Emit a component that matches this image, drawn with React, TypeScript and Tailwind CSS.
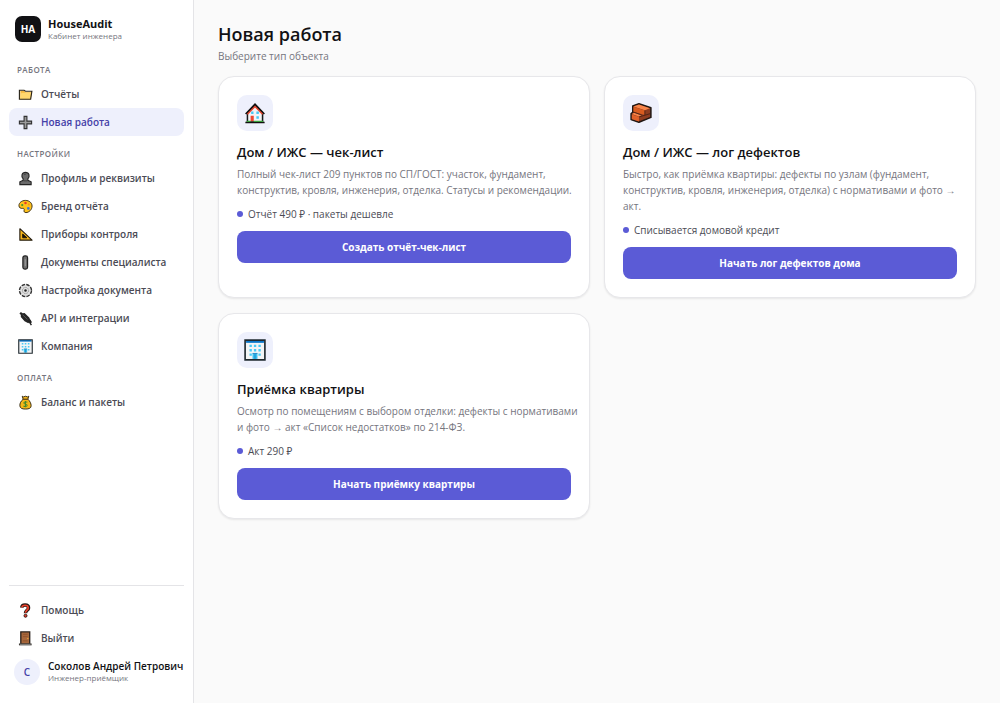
import type { ReactNode } from "react";

type IconName =
  | "folder"
  | "plus"
  | "person"
  | "palette"
  | "ruler"
  | "clip"
  | "gear"
  | "plug"
  | "office"
  | "money"
  | "question"
  | "door"
  | "house"
  | "brick";

interface NavItem {
  icon: IconName;
  label: string;
  active?: boolean;
}

interface WorkCard {
  icon: IconName;
  title: string;
  text: string;
  note: string;
  action: string;
}

const SECTIONS: { title: string; items: NavItem[] }[] = [
  {
    title: "Работа",
    items: [
      { icon: "folder", label: "Отчёты" },
      { icon: "plus", label: "Новая работа", active: true },
    ],
  },
  {
    title: "Настройки",
    items: [
      { icon: "person", label: "Профиль и реквизиты" },
      { icon: "palette", label: "Бренд отчёта" },
      { icon: "ruler", label: "Приборы контроля" },
      { icon: "clip", label: "Документы специалиста" },
      { icon: "gear", label: "Настройка документа" },
      { icon: "plug", label: "API и интеграции" },
      { icon: "office", label: "Компания" },
    ],
  },
  { title: "Оплата", items: [{ icon: "money", label: "Баланс и пакеты" }] },
];

const CARDS: WorkCard[] = [
  {
    icon: "house",
    title: "Дом / ИЖС — чек-лист",
    text: "Полный чек-лист 209 пунктов по СП/ГОСТ: участок, фундамент, конструктив, кровля, инженерия, отделка. Статусы и рекомендации.",
    note: "Отчёт 490 ₽ · пакеты дешевле",
    action: "Создать отчёт-чек-лист",
  },
  {
    icon: "brick",
    title: "Дом / ИЖС — лог дефектов",
    text: "Быстро, как приёмка квартиры: дефекты по узлам (фундамент, конструктив, кровля, инженерия, отделка) с нормативами и фото → акт.",
    note: "Списывается домовой кредит",
    action: "Начать лог дефектов дома",
  },
  {
    icon: "office",
    title: "Приёмка квартиры",
    text: "Осмотр по помещениям с выбором отделки: дефекты с нормативами и фото → акт «Список недостатков» по 214-ФЗ.",
    note: "Акт 290 ₽",
    action: "Начать приёмку квартиры",
  },
];

export default function App() {
  return (
    <div className="flex min-h-screen bg-[#fafafa] font-['Open_Sans','Noto_Sans',sans-serif] text-[#111114]">
      <Sidebar />
      <main className="min-w-0 flex-1 px-6 pt-5 pb-6">
        <h1 className="text-[18px] leading-7 font-semibold">Новая работа</h1>
        <p className="mb-3 text-[10px] leading-4 text-[#75757e]">Выберите тип объекта</p>
        <div className="grid grid-cols-2 gap-x-[14px] gap-y-[15px]">
          {CARDS.map((c) => (
            <Card key={c.title} card={c} />
          ))}
        </div>
      </main>
    </div>
  );
}

function Sidebar() {
  return (
    <aside className="flex w-[194px] shrink-0 flex-col border-r border-[#e4e4e7] bg-white px-[9px] pt-4 pb-[18px]">
      <div className="mb-[18px] flex items-center gap-[7px] px-[6px]">
        <div className="flex size-[26px] shrink-0 items-center justify-center rounded-[7px] bg-[#111114] text-[10px] font-bold text-white">
          HA
        </div>
        <div>
          <div className="text-[11px] leading-[14px] font-bold">HouseAudit</div>
          <div className="text-[8px] leading-[10px] text-[#75757e]">Кабинет инженера</div>
        </div>
      </div>

      <nav className="flex flex-col gap-2">
        {SECTIONS.map((s) => (
          <section key={s.title}>
            <h2 className="px-2 text-[8px] leading-5 font-semibold tracking-wider text-[#75757e] uppercase">
              {s.title}
            </h2>
            {s.items.map((i) => (
              <NavButton key={i.label} item={i} />
            ))}
          </section>
        ))}
      </nav>

      <div className="mt-auto border-t border-[#e4e4e7] pt-[10px]">
        <NavButton item={{ icon: "question", label: "Помощь" }} />
        <NavButton item={{ icon: "door", label: "Выйти" }} />
        <div className="mt-[7px] flex items-center gap-2 px-[5px]">
          <div className="flex size-[26px] shrink-0 items-center justify-center rounded-full bg-[#eef0fc] text-[10px] font-semibold text-[#4540a8]">
            С
          </div>
          <div className="whitespace-nowrap">
            <div className="text-[10px] leading-3 font-semibold">Соколов Андрей Петрович</div>
            <div className="text-[8px] leading-3 text-[#75757e]">Инженер-приёмщик</div>
          </div>
        </div>
      </div>
    </aside>
  );
}

function NavButton({ item }: { item: NavItem }) {
  return (
    <button
      type="button"
      className={`flex h-7 w-full items-center gap-2 rounded-lg px-[9px] text-left text-[10px] font-semibold whitespace-nowrap ${
        item.active ? "bg-[#eef0fc] text-[#4540a8]" : "text-[#4b4b55]"
      }`}
    >
      <Icon name={item.icon} className="size-[15px] shrink-0" />
      {item.label}
    </button>
  );
}

function Card({ card }: { card: WorkCard }) {
  return (
    <article className="rounded-2xl border border-[#e7e7ea] bg-white p-[18px] shadow-[0_1px_2px_rgba(0,0,0,0.08)]">
      <div className="mb-[11px] flex size-9 items-center justify-center rounded-[10px] bg-[#eef0fc]">
        <Icon name={card.icon} className="size-[22px]" />
      </div>
      <h2 className="mb-1 text-[13px] leading-5 font-semibold">{card.title}</h2>
      <p className="-mr-2 mb-2 text-[10px] leading-4 text-[#75757e]">{card.text}</p>
      <p className="mb-[9px] flex items-center gap-[5px] text-[10px] leading-4 text-[#4b4b55]">
        <span className="size-[6px] rounded-full bg-[#5b5bd6]" />
        {card.note}
      </p>
      <button
        type="button"
        className="h-8 w-full rounded-lg bg-[#5b5bd6] text-[10px] font-bold text-white"
      >
        {card.action}
      </button>
    </article>
  );
}

const ICONS: Record<IconName, ReactNode> = {
  folder: (
    <>
      <path d="M2.500 4h4l1.500 1.500h7L13.500 13h-11z" fill="#f3b73e" />
      <path d="M3.500 6h11L13 13H2z" fill="#ffd76e" />
      <path d="M1.500 13V3.500h5L8 4.500h6.800L13.500 13z" fill="none" stroke="#2a2419" strokeWidth="1.200" />
    </>
  ),
  plus: <path d="M6.500 1.500h3v5h5v3h-5v5h-3v-5h-5v-3h5z" fill="#9b9b9b" stroke="#333" strokeWidth="1.200" />,
  person: (
    <>
      <path
        d="M5.500 8.500C3 5.500 4 1.500 8 1.500s5 4 2.500 7v1.500l3.500 1.500v3H2v-3L5.500 10z"
        fill="#6b6b6b"
        stroke="#252525"
        strokeWidth="1.200"
      />
      <path d="M6 10.500h4M6.500 4l2-.8" stroke="#3f3f3f" />
    </>
  ),
  palette: (
    <>
      <path
        d="M8 1.500c4 0 7 2.700 7 6 0 4-3.500 7-6.500 7-1.500 0-2.500-1-2-2.500.4-1.200 0-2.200-1.500-2-2 .3-4-.5-4-3C1 4 4 1.500 8 1.500z"
        fill="#ffc21c"
        stroke="#3a2c10"
      />
      <circle cx="4.500" cy="6.500" r="1.200" fill="#3b9b38" />
      <circle cx="8" cy="4.300" r="1.300" fill="#e83a2a" />
      <circle cx="11.500" cy="5.800" r="1" fill="#fa8b20" />
      <circle cx="11" cy="10" r="1.400" fill="#3476df" />
    </>
  ),
  ruler: (
    <>
      <path d="M2 1.800 15 14H2z" fill="#f5b51c" stroke="#221b10" strokeWidth="1.200" strokeLinejoin="round" />
      <path d="M5 7.500 9.500 11.500H5z" fill="#17130b" stroke="#17130b" />
    </>
  ),
  clip: (
    <>
      <rect x="5.200" y="1" width="5" height="14" rx="2" fill="#6d6d6d" stroke="#222" strokeWidth="1.300" />
      <path d="M7.700 4.500v7.500" stroke="#a0a0a0" strokeWidth="1.100" />
    </>
  ),
  gear: (
    <>
      <circle cx="8" cy="8" r="6.300" fill="#dedede" stroke="#333" strokeWidth="1.700" strokeDasharray="3.700 1.250" />
      <circle cx="8" cy="8" r="5.500" fill="#dedede" />
      <circle cx="8" cy="8" r="3.300" fill="none" stroke="#777" strokeWidth=".8" strokeDasharray="1.500 1" />
      <circle cx="8" cy="8" r="1.300" fill="#222" />
    </>
  ),
  plug: (
    <>
      <path d="M1.500 3 3 1l2 1.500L7 2l5 5 1.500 3.500-2.500 2.500L7 11 3 6.500V4z" fill="#262626" />
      <path d="m11 10 3.300 5M12.500 9.500l1.800 3" stroke="#222" strokeWidth="1.500" />
      <path d="m5 4 5 5" stroke="#575757" />
    </>
  ),
  office: (
    <>
      <path d="M1 1.500h14v13H1z" fill="#f3f5f6" />
      <path d="M1.500 1.900h13" stroke="#0875c9" strokeWidth="1.800" />
      <path d="M4 5h1.700M7.200 5h1.700M10.500 5h1.700M4 8.200h1.700M7.200 8.200h1.700M10.500 8.200h1.700M4 11.400h1.700M10.500 11.400h1.700" stroke="#48caf6" strokeWidth="1.700" />
      <path d="M6.200 10.500h3.600v4H6.200z" fill="#37c0f0" />
      <path d="M6.200 10.500h3.600M8 11v3.500" stroke="#1679bd" strokeWidth=".6" />
      <path d="M.8.800h14.400v14.400H.8z" fill="none" stroke="#202a30" strokeWidth="1.200" />
    </>
  ),
  money: (
    <>
      <path
        d="M5.500 4.500C3 6.500 1.800 9 2 11.500S4 15 8 15s6-1 6-3.500-1.200-5-3.500-7z"
        fill="#f7b719"
        stroke="#322710"
      />
      <path d="M4.500 1.300 6 2l2-.7 2 .7 1.500-.7-1 3.200h-5z" fill="#f7b719" stroke="#322710" />
      <path d="M5 4.700h6" stroke="#725019" />
      <path d="M10 7.800C8 6.800 6 7.500 6.300 8.800c.3 1.200 3.500.7 3.500 2.200 0 1.400-2.300 1.700-4 .8M8 6.500v6.500" fill="none" stroke="#458b2d" strokeWidth="1.100" />
    </>
  ),
  question: (
    <>
      <path d="M4 5C4.200 2.800 5.500 2.200 7.500 2.200c2.500 0 3.700 1.200 3.700 3C11.200 7.700 8 7.900 8 10.800" fill="none" stroke="#291915" strokeWidth="3.800" />
      <path d="M4.200 4.700C4.500 3 5.700 2.400 7.500 2.400c2.300 0 3.400 1 3.400 2.800C10.900 7.500 8 7.800 8 10.500" fill="none" stroke="#ee422b" strokeWidth="1.800" />
      <circle cx="8" cy="13.600" r="1.600" fill="#e93a28" stroke="#291915" />
    </>
  ),
  door: (
    <>
      <path d="M3 1h9.500v13H3z" fill="#a8683d" stroke="#29211b" strokeWidth="1.400" />
      <path d="M5.300 3.500h4.900M5.300 6h4.900M5.300 10.500h4.900" stroke="#8a4d27" strokeWidth=".8" />
      <path d="M1 14.300h13.500" stroke="#37332f" strokeWidth="2" />
      <path d="M2 14.200h11.500" stroke="#aaa" strokeWidth=".8" />
      <circle cx="10.500" cy="8" r=".7" fill="#efb13b" />
    </>
  ),
  house: (
    <>
      <path d="M2.500 8 8 2.500 13.500 8v6.500h-11z" fill="#f3f4f5" stroke="#15191c" strokeWidth="1.100" />
      <path d="M1.200 8.700 8 1.600l6.800 7.100" fill="none" stroke="#111" strokeWidth="1.200" />
      <path d="M2.500 8.900 8 3.200l5.500 5.700" fill="none" stroke="#ed4830" strokeWidth="1" />
      <path d="M4.800 10h2.300v4H4.800z" fill="#ed4830" />
      <path d="M5.200 7.800h1.700M9 7.800h1.800M9 11.300h1.800" stroke="#45c8f4" strokeWidth="1.700" />
      <path d="M1 14.900h14" stroke="#111" strokeWidth="1.100" />
      <path d="M2 14.100h2.800M7.100 14.100H14" stroke="#3aa23b" strokeWidth=".9" />
    </>
  ),
  brick: (
    <>
      <path d="M.8 8.500 2 7.500V2.800L6.500 1.300l8.700 2.900v7L6.500 14.700.8 12.800z" fill="#8e3c20" stroke="#211713" strokeWidth="1.100" strokeLinejoin="round" />
      <path d="m2.500 3.200 4-1.300 8 2.700-3.700 1.400z" fill="#f8854a" />
      <path d="m2.500 3.500 8.300 2.600v3.400L2.500 7z" fill="#d95c20" />
      <path d="m1.300 8.800 1.700-1 5.500 1.900-2 .9z" fill="#f8854a" />
      <path d="m1.300 9.100 5.200 1.600v3.400l-5.200-1.700z" fill="#e0612a" />
      <path d="m6.700 10.800 7.900-2.300M10.800 6.200v3.300M2.500 7.300l6 2.200" fill="none" stroke="#442015" strokeWidth=".6" />
    </>
  ),
};

function Icon({ name, className }: { name: IconName; className: string }) {
  return (
    <svg viewBox="0 0 16 16" className={className} aria-hidden="true">
      {ICONS[name]}
    </svg>
  );
}
